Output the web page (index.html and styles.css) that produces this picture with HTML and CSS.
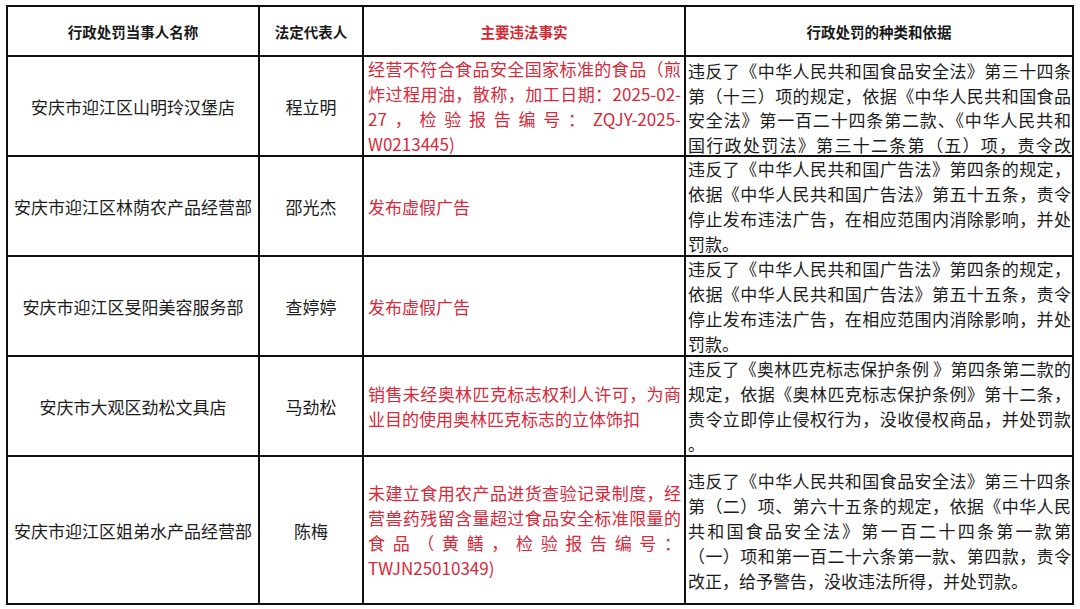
FILE: index.html
```html
<!DOCTYPE html>
<html lang="zh-CN">
<head>
<meta charset="utf-8">
<title>行政处罚信息</title>
<link rel="stylesheet" href="styles.css">
</head>
<body>
<div class="page">
  <div class="grid">
    <div class="cell head">行政处罚当事人名称</div>
    <div class="cell head">法定代表人</div>
    <div class="cell head red">主要违法事实</div>
    <div class="cell head">行政处罚的种类和依据</div>

    <div class="cell center">安庆市迎江区山明玲汉堡店</div>
    <div class="cell center">程立明</div>
    <div class="cell fact red">
      <p class="para">
        <span class="ln">经营不符合食品安全国家标准的食品（煎</span>
        <span class="ln">炸过程用油，散称，加工日期：2025-02-</span>
        <span class="ln">27，检验报告编号：ZQJY-2025-</span>
        <span class="last">W0213445)</span>
      </p>
    </div>
    <div class="cell basis top">
      <p class="para tight">
        <span class="ln">违反了《中华人民共和国食品安全法》第三十四条</span>
        <span class="ln">第（十三）项的规定，依据《中华人民共和国食品</span>
        <span class="ln">安全法》第一百二十四条第二款、《中华人民共和</span>
        <span class="ln">国行政处罚法》第三十二条第（五）项，责令改</span>
      </p>
    </div>

    <div class="cell center">安庆市迎江区林荫农产品经营部</div>
    <div class="cell center">邵光杰</div>
    <div class="cell fact red"><p class="para"><span class="last">发布虚假广告</span></p></div>
    <div class="cell basis">
      <p class="para">
        <span class="ln">违反了《中华人民共和国广告法》第四条的规定，</span>
        <span class="ln">依据《中华人民共和国广告法》第五十五条，责令</span>
        <span class="ln">停止发布违法广告，在相应范围内消除影响，并处</span>
        <span class="last">罚款。</span>
      </p>
    </div>

    <div class="cell center">安庆市迎江区旻阳美容服务部</div>
    <div class="cell center">查婷婷</div>
    <div class="cell fact red"><p class="para"><span class="last">发布虚假广告</span></p></div>
    <div class="cell basis">
      <p class="para">
        <span class="ln">违反了《中华人民共和国广告法》第四条的规定，</span>
        <span class="ln">依据《中华人民共和国广告法》第五十五条，责令</span>
        <span class="ln">停止发布违法广告，在相应范围内消除影响，并处</span>
        <span class="last">罚款。</span>
      </p>
    </div>

    <div class="cell center">安庆市大观区劲松文具店</div>
    <div class="cell center">马劲松</div>
    <div class="cell fact red">
      <p class="para">
        <span class="ln">销售未经奥林匹克标志权利人许可，为商</span>
        <span class="last">业目的使用奥林匹克标志的立体饰扣</span>
      </p>
    </div>
    <div class="cell basis">
      <p class="para">
        <span class="ln">违反了《奥林匹克标志保护条例 》第四条第二款的</span>
        <span class="ln">规定，依据《奥林匹克标志保护条例》第十二条，</span>
        <span class="ln">责令立即停止侵权行为，没收侵权商品，并处罚款</span>
        <span class="last">。</span>
      </p>
    </div>

    <div class="cell center">安庆市迎江区姐弟水产品经营部</div>
    <div class="cell center">陈梅</div>
    <div class="cell fact red">
      <p class="para">
        <span class="ln">未建立食用农产品进货查验记录制度，经</span>
        <span class="ln">营兽药残留含量超过食品安全标准限量的</span>
        <span class="ln">食品（黄鳝，检验报告编号：</span>
        <span class="last">TWJN25010349)</span>
      </p>
    </div>
    <div class="cell basis">
      <p class="para">
        <span class="ln">违反了《中华人民共和国食品安全法》第三十四条</span>
        <span class="ln">第（二）项、第六十五条的规定，依据《中华人民</span>
        <span class="ln">共和国食品安全法》第一百二十四条第一款第</span>
        <span class="ln">（一）项和第一百二十六条第一款、第四款，责令</span>
        <span class="last">改正，给予警告，没收违法所得，并处罚款。</span>
      </p>
    </div>
  </div>
</div>
</body>
</html>
```

FILE: styles.css
```css
html, body {
  margin: 0;
  padding: 0;
  background: #ffffff;
}

body {
  font-family: "Noto Sans CJK SC", "Noto Sans", sans-serif;
  color: #1c1c1c;
}

.page {
  padding: 5px 0 0 6px;
}

.grid {
  display: grid;
  grid-template-columns: 252px 104px 322px 388px;
  grid-template-rows: 50px 100px 100px 100px 100px 148px;
  width: 1068px;
  border-top: 2px solid #111;
  border-left: 2px solid #111;
  box-sizing: border-box;
}

.cell {
  box-sizing: border-box;
  border-right: 2px solid #111;
  border-bottom: 2px solid #111;
  display: flex;
  align-items: center;
  overflow: hidden;
  font-size: 17px;
  line-height: 25px;
}

.head {
  justify-content: center;
  font-size: 14.5px;
  font-weight: 700;
  color: #1a1a1a;
}

.center {
  justify-content: center;
  text-align: center;
}

.red {
  color: #d8283a;
}

.head.red {
  color: #d42a34;
}

.fact {
  padding: 0 3px 0 4px;
}

.basis {
  padding: 0 1px 0 2px;
}

.basis.top {
  align-items: flex-start;
  padding-top: 2px;
}

.para {
  margin: 0;
  width: 100%;
}

.tight {
  line-height: 24.5px;
}

.ln {
  display: block;
  text-align: justify;
  text-align-last: justify;
  white-space: nowrap;
}

.last {
  display: block;
  text-align: left;
  white-space: nowrap;
}
```
